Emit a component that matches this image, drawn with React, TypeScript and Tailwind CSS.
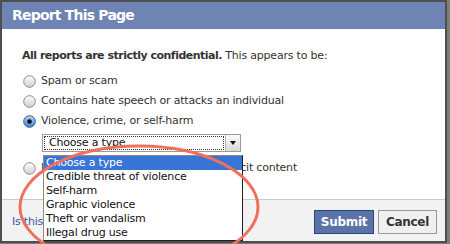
import React from "react";

const font = { fontFamily: '"DejaVu Sans", "Noto Sans", sans-serif' };

function Radio({ checked = false }: { checked?: boolean }) {
  return (
    <svg width="13" height="13" viewBox="0 0 13 13" className="shrink-0">
      <defs>
        <linearGradient id="rOff" x1="0" y1="0" x2="0" y2="1">
          <stop offset="0" stopColor="#ffffff" />
          <stop offset="1" stopColor="#cfcfcf" />
        </linearGradient>
        <linearGradient id="rOn" x1="0" y1="0" x2="0" y2="1">
          <stop offset="0" stopColor="#b7d3f5" />
          <stop offset="1" stopColor="#3f82d6" />
        </linearGradient>
      </defs>
      <circle
        cx="6.5"
        cy="6.5"
        r="5.8"
        fill={checked ? "url(#rOn)" : "url(#rOff)"}
        stroke={checked ? "#3a5d8f" : "#8c8c8c"}
        strokeWidth="1"
      />
      {checked && <circle cx="6.5" cy="6.5" r="2.3" fill="#111" />}
    </svg>
  );
}

function Option({ label, checked }: { label: string; checked?: boolean }) {
  return (
    <label className="flex h-[20px] items-center gap-[5px] pl-[1px] text-[11px] tracking-[-0.2px] text-[#333]">
      <Radio checked={checked} />
      <span>{label}</span>
    </label>
  );
}

const types = [
  "Choose a type",
  "Credible threat of violence",
  "Self-harm",
  "Graphic violence",
  "Theft or vandalism",
  "Illegal drug use",
];

export default function App() {
  return (
    <div className="relative h-[244px] w-[450px] overflow-hidden bg-[#7c7c7c]" style={font}>
      <div className="flex h-[243px] w-[447px] flex-col border-2 border-[#4e4e4e]">
        <div className="flex h-[27px] items-center bg-[#6d84b4] pl-[10px]">
          <h2 className="text-[14px] font-bold tracking-[-0.8px] text-white">Report This Page</h2>
        </div>

        <div className="h-[170px] bg-white pl-[20px] pt-[20px]">
          <p className="mb-[8px] text-[11px] leading-[14px] tracking-[-0.2px] text-[#333]">
            <span className="font-bold tracking-[-0.5px]">All reports are strictly confidential.</span> This
            appears to be:
          </p>
          <Option label="Spam or scam" />
          <Option label="Contains hate speech or attacks an individual" />
          <Option label="Violence, crime, or self-harm" checked />

          <div className="relative z-10 ml-[20px] mt-[3px] w-[199px]">
            <div className="flex h-[18px] items-stretch border border-[#9b9b9b] bg-white">
              <div className="m-[1px] flex flex-1 items-center border border-dotted border-[#333] pl-[4px] text-[11px] tracking-[-0.2px] text-[#111]">
                Choose a type
              </div>
              <div className="flex w-[15px] items-center justify-center border-l border-[#b5b5b5] bg-gradient-to-b from-[#fafafa] to-[#d8d8d8]">
                <span className="h-0 w-0 border-x-[3.5px] border-t-[4px] border-x-transparent border-t-[#111]" />
              </div>
            </div>
            <ul className="absolute left-[1px] top-[21px] w-[200px] border border-[#8a8a8a] border-b-[#1e1e1e] border-r-[#1e1e1e] bg-white text-[11px] tracking-[-0.2px] text-[#111]">
              {types.map((t, i) => (
                <li
                  key={t}
                  className={
                    i === 0
                      ? "flex h-[14px] items-center bg-[#3875d7] pl-[2px] text-white"
                      : "flex h-[14px] items-center pl-[2px]"
                  }
                >
                  {t}
                </li>
              ))}
            </ul>
          </div>

          <div className="mt-[6px]">
            <Option label="Nudity, pornography or sexually explicit content" />
          </div>
        </div>

        <div className="flex flex-1 items-center justify-between border-t border-[#cccccc] bg-[#f2f2f2] pl-[10px] pr-[8px] pt-[3px]">
          <a className="text-[11px] tracking-[-0.2px] text-[#3b5998]">Is this your intellectual property?</a>
          <div className="flex gap-[4px]">
            <button className="h-[24px] w-[60px] border border-[#29447e] bg-[#5b74a8] text-[12px] font-bold tracking-[-0.3px] text-white">
              Submit
            </button>
            <button className="h-[24px] w-[59px] border border-[#999999] bg-[#f0f0f0] text-[12px] font-bold tracking-[-0.3px] text-[#333]">
              Cancel
            </button>
          </div>
        </div>
      </div>

      <svg className="pointer-events-none absolute inset-0 z-20" width="450" height="244">
        <ellipse cx="139" cy="207" rx="119" ry="61" fill="none" stroke="#f0705e" strokeWidth="3" />
      </svg>
    </div>
  );
}
